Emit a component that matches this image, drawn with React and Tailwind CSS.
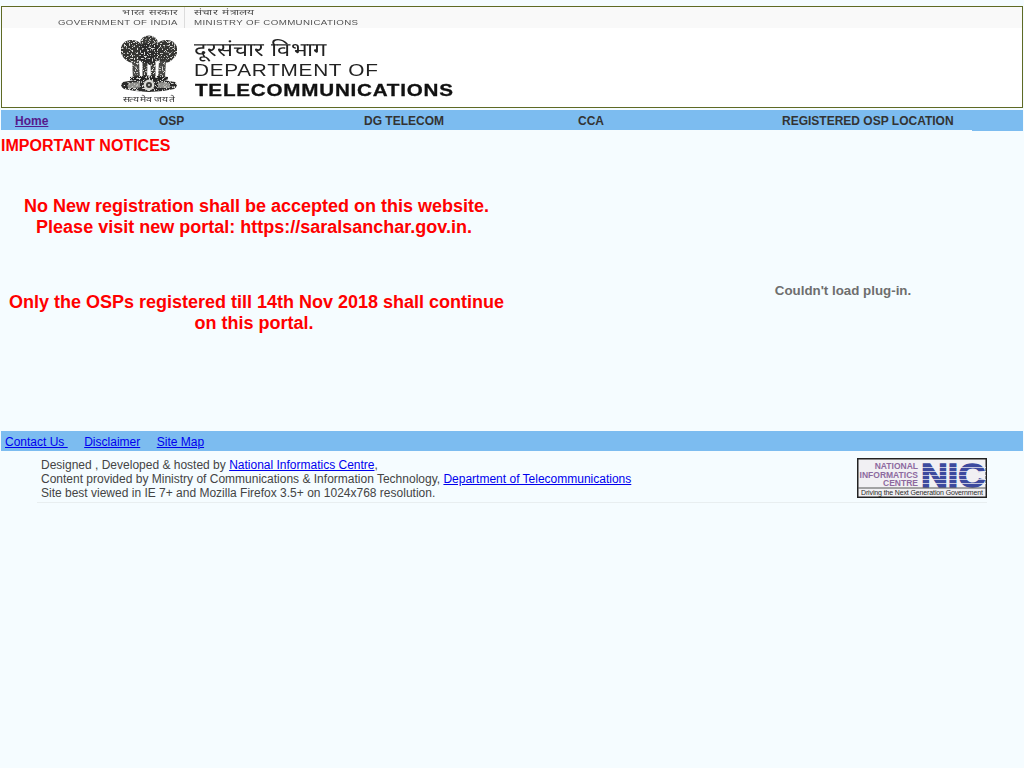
const FONT = { fontFamily: '"Liberation Sans", Arial, sans-serif' };

function Emblem() {
  return (
    <svg width="60" height="58" viewBox="0 0 60 58" className="block">
      <defs>
        <filter id="engrave" x="-5%" y="-5%" width="110%" height="110%">
          <feTurbulence type="fractalNoise" baseFrequency="0.6" numOctaves="2" seed="4" result="n" />
          <feColorMatrix in="n" type="matrix" values="0 0 0 0 0.72  0 0 0 0 0.72  0 0 0 0 0.7  0 0 0 -9 3.9" result="spots" />
          <feComposite in="spots" in2="SourceGraphic" operator="in" result="light" />
          <feMerge result="m">
            <feMergeNode in="SourceGraphic" />
            <feMergeNode in="light" />
          </feMerge>
          <feGaussianBlur in="m" stdDeviation="0.4" />
        </filter>
      </defs>
      <g filter="url(#engrave)">
        <ellipse cx="30" cy="7" rx="8.5" ry="6.5" fill="#3a3a38" />
        <path d="M2 12 Q5 5 12 5 Q19 5 22 9 L23 24 Q17 29 10 27 Q4 24 2 18 Z" fill="#343432" />
        <path d="M58 12 Q55 5 48 5 Q41 5 38 9 L37 24 Q43 29 50 27 Q56 24 58 18 Z" fill="#343432" />
        <path d="M21 10 Q30 6 39 10 L40 24 Q36 30 30 30 Q24 30 20 24 Z" fill="#2c2c2a" />
        <path d="M13 26 L20 26 L21 43 L14 43 Z" fill="#4a4a47" />
        <path d="M40 26 L47 26 L46 43 L39 43 Z" fill="#4a4a47" />
        <path d="M23.5 28 L28.5 28 L28 43 L23.5 43 Z M31.5 28 L36.5 28 L36.5 43 L32 43 Z" fill="#3b3b39" />
        <path d="M11 42 Q30 39 49 42 L49 45 L11 45 Z" fill="#222220" />
        <path d="M4 47 Q30 41 56 47 Q60 51 55 54 Q30 60 5 54 Q0 51 4 47 Z" fill="#2b2b29" />
      </g>
      <path d="M21.5 27 L22.5 42 M29.5 29 L30.5 42 M37.5 27 L37.5 42" stroke="#ffffff" strokeWidth="0.9" fill="none" opacity="0.8" />
      <path d="M9 48.5 Q15 46.5 21 47.5 L21 52.5 Q15 53 9 53 Z M39 47.5 Q45 46.5 51 48.5 L51 53 Q45 53 39 52.5 Z" fill="#bdbdb9" opacity="0.7" />
      <circle cx="30" cy="50" r="5.4" fill="#d8d8d4" />
      <circle cx="30" cy="50" r="3" fill="#3a3a38" />
      <circle cx="30" cy="50" r="1" fill="#d8d8d4" />
    </svg>
  );
}

function NicLogo() {
  const stripes = [9, 13, 17, 21, 25];
  return (
    <svg width="130" height="40" viewBox="0 0 130 40" className="block" style={FONT}>
      <rect x="0.75" y="0.75" width="128.5" height="38.5" fill="#f1f0f3" stroke="#222" strokeWidth="1.5" />
      <g fill="#8d6a9f" fontWeight="700" fontSize="8.5" textAnchor="end">
        <text x="61" y="11">NATIONAL</text>
        <text x="61" y="20">INFORMATICS</text>
        <text x="61" y="28">CENTRE</text>
      </g>
      <text x="64" y="29" fill="#3d4a9e" fontSize="33" fontWeight="700" textLength="64" lengthAdjust="spacingAndGlyphs" stroke="#3d4a9e" strokeWidth="1.4">NIC</text>
      {stripes.map((y) => (
        <rect key={y} x="63" y={y} width="66" height="1" fill="#f1f0f3" opacity="0.75" />
      ))}
      <rect x="1" y="29.5" width="128" height="1" fill="#555" />
      <text x="4" y="36.5" fill="#2a2a2a" fontSize="7" fontWeight="400" textLength="122" lengthAdjust="spacing">Driving the Next Generation Government</text>
    </svg>
  );
}

export default function App() {
  return (
    <div className="min-h-[768px] bg-[#f5fcff] pt-[6px] text-[13px]" style={FONT}>
      <header className="mx-px h-[102px] border border-[#5f6a24] bg-white">
        <div className="flex h-[21px] bg-[#f9f9f9] text-[#505050]">
          <div className="flex w-[176px] flex-col items-end pt-[1px] text-[8px] leading-[10px] tracking-[0.3px]">
            <span className="origin-right scale-x-[1.4]">भारत सरकार</span>
            <span className="origin-right scale-x-[1.2]">GOVERNMENT OF INDIA</span>
          </div>
          <div className="ml-[6px] h-full w-px bg-[#dcdcdc]" />
          <div className="ml-[9px] flex flex-col items-start pt-[1px] text-[8px] leading-[10px] tracking-[0.3px]">
            <span className="origin-left scale-x-[1.5]">संचार मंत्रालय</span>
            <span className="origin-left scale-x-[1.215]">MINISTRY OF COMMUNICATIONS</span>
          </div>
        </div>
        <div className="flex">
          <div className="ml-[117px] mt-[7px] flex w-[60px] flex-col items-center">
            <Emblem />
            <span className="mt-[1px] origin-center scale-x-[1.3] whitespace-nowrap text-[8px] leading-[11px] text-[#333]">सत्यमेव जयते</span>
          </div>
          <div className="ml-[15px] mt-[12px] flex flex-col items-start text-[#222]">
            <span className="origin-left scale-x-[1.25] text-[19px] leading-[20px]">दूरसंचार विभाग</span>
            <span className="origin-left scale-x-[1.26] text-[16.5px] leading-[20px] tracking-[0.55px]">DEPARTMENT OF</span>
            <span className="ml-[1px] origin-left scale-x-[1.25] text-[16.5px] font-bold leading-[20px] tracking-[0.62px] text-[#111] [-webkit-text-stroke:0.3px_#111]">TELECOMMUNICATIONS</span>
          </div>
        </div>
      </header>

      <nav className="relative mx-px mt-[2px] flex h-[21px] items-center border-b border-b-[#f5fcff] bg-[#7cbcf0] pl-[14px] pt-[2px] text-[12px] font-bold text-[#333333]">
        <a href="#" className="w-[144px] text-[#551a8b] underline">Home</a>
        <span className="w-[205px]">OSP</span>
        <span className="w-[214px]">DG TELECOM</span>
        <span className="w-[204px]">CCA</span>
        <span>REGISTERED OSP LOCATION</span>
        <span className="absolute bottom-[-1px] right-0 h-px w-[51px] bg-[#7cbcf0]" />
      </nav>

      <main className="flex h-[300px]">
        <section className="w-[512px] pl-px font-bold text-[#ff0000]">
          <h1 className="mt-[6px] text-[16px] leading-[18px]">IMPORTANT NOTICES</h1>
          <div className="mt-[41px] text-center text-[18px] leading-[21px]">
            <p>No New registration shall be accepted on this website.</p>
            <p>Please visit new portal: https://saralsanchar.gov.in.&nbsp;</p>
            <p className="mx-auto mt-[54px] w-[505px]">Only the OSPs registered till 14th Nov 2018 shall continue on this portal.&nbsp;</p>
          </div>
        </section>
        <section className="flex flex-1 justify-center pl-[150px] pt-[150px] text-[13.33px] font-bold text-[#6e6e6e]">
          <span>Couldn't load plug-in.</span>
        </section>
      </main>

      <div className="mx-px flex h-[20px] items-center gap-[16.5px] bg-[#7cbcf0] pl-[4px] pt-[2px] text-[12px] text-[#0000ee]">
        <a href="#" className="underline">Contact Us&nbsp;</a>
        <a href="#" className="underline">Disclaimer</a>
        <a href="#" className="underline">Site Map</a>
      </div>

      <footer className="mx-[37px] mt-[7px] flex h-[45px] items-start justify-between border-b border-b-[#e8eef0] text-[12px] leading-[14px] text-[#444444]">
        <div className="pl-[4px]">
          <div>Designed , Developed &amp; hosted by <a href="#" className="text-[#0000ee] underline">National Informatics Centre</a>,</div>
          <div>Content provided by Ministry of Communications &amp; Information Technology, <a href="#" className="text-[#0000ee] underline">Department of Telecommunications</a></div>
          <div>Site best viewed in IE 7+ and Mozilla Firefox 3.5+ on 1024x768 resolution.</div>
        </div>
        <NicLogo />
      </footer>
    </div>
  );
}
